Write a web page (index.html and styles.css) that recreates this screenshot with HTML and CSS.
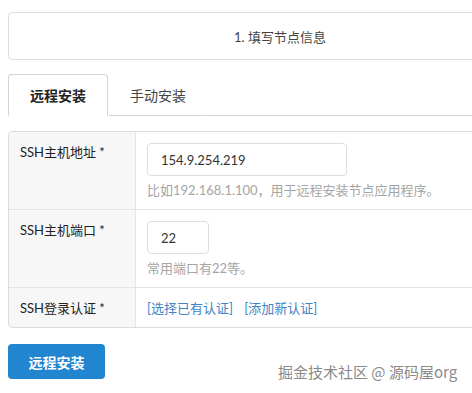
FILE: index.html
```html
<!DOCTYPE html>
<html lang="zh-CN">
    <head>
        <meta charset="UTF-8">
        <meta name="viewport" content="width=device-width, initial-scale=1.0">
        <title>安装节点</title>
        <link rel="stylesheet" href="styles.css">
    </head>
    <body>
        <div class="page">
            <div class="steps">
                <div class="step">1. 填写节点信息</div>
            </div>
            <div class="tabs">
                <a class="tab active">远程安装</a>
                <a class="tab">手动安装</a>
                <div class="tab-fill"></div>
            </div>
            <table class="form-table">
                <tr>
                    <td class="label">SSH主机地址 *</td>
                    <td>
                        <input class="input wide" type="text" value="154.9.254.219">
                        <p class="comment">比如192.168.1.100，用于远程安装节点应用程序。</p>
                    </td>
                </tr>
                <tr>
                    <td class="label">SSH主机端口 *</td>
                    <td>
                        <input class="input narrow" type="text" value="22">
                        <p class="comment">常用端口有22等。</p>
                    </td>
                </tr>
                <tr>
                    <td class="label">SSH登录认证 *</td>
                    <td>
                        <a class="link">[选择已有认证]</a>
                        <a class="link">[添加新认证]</a>
                    </td>
                </tr>
            </table>
            <button class="btn-primary">远程安装</button>
        </div>
        <div class="watermark">掘金技术社区 @ 源码屋org</div>
    </body>
</html>
```

FILE: styles.css
```css
* {
    box-sizing: border-box;
}

html, body {
    overflow: hidden;
}

body {
    margin: 0;
    padding: 12px 8px;
    font-family: Lato, "Noto Sans CJK SC", sans-serif;
    font-size: 13px;
    color: #333333;
    background-color: white;
}

.page {
    width: 544px;
}

.steps {
    border: 1px solid #dcdcdd;
    border-radius: 4px;
    height: 48px;
    display: flex;
    align-items: center;
    justify-content: center;
}

.step {
    color: #444444;
}

.tabs {
    display: flex;
    margin-top: 14px;
    height: 42px;
}

.tab {
    display: flex;
    align-items: center;
    padding: 0 21px;
    font-size: 14px;
    color: #444444;
    border: 1px solid transparent;
    border-bottom-color: #d4d4d5;
}

.tab.active {
    font-weight: bold;
    color: #222222;
    border-color: #d4d4d5;
    border-bottom-color: transparent;
    border-radius: 4px 4px 0 0;
}

.tab-fill {
    flex: 1;
    border-bottom: 1px solid #d4d4d5;
}

.form-table {
    width: 100%;
    margin-top: 15px;
    border-collapse: separate;
    border-spacing: 0;
    border: 1px solid #dcdcdd;
    border-radius: 4px;
}

.form-table td {
    padding: 11px 11px 10px;
    vertical-align: top;
    line-height: 18px;
    border-top: 1px solid #e4e4e4;
}

.form-table tr:first-child td {
    border-top: none;
}

.form-table td.label {
    width: 127px;
    background-color: #f7f7f7;
    border-right: 1px solid #e4e4e4;
    color: #222222;
}

.form-table tr:first-child td.label {
    border-top-left-radius: 4px;
}

.form-table tr:last-child td.label {
    border-bottom-left-radius: 4px;
}

.input {
    display: block;
    height: 33px;
    padding: 0 13px;
    border: 1px solid #dedede;
    border-radius: 4px;
    font-family: Lato, "Noto Sans CJK SC", sans-serif;
    font-size: 13px;
    color: #333333;
    outline: none;
}

.wide {
    width: 200px;
}

.narrow {
    width: 62px;
}

.comment {
    margin: 5px 0 0;
    color: #a5a5a5;
}

.link {
    color: #4183c4;
    margin-right: 8px;
}

.btn-primary {
    margin-top: 16px;
    width: 97px;
    height: 35px;
    border: none;
    border-radius: 4px;
    background-color: #2185d0;
    color: white;
    font-family: Lato, "Noto Sans CJK SC", sans-serif;
    font-size: 14px;
    font-weight: bold;
}

.watermark {
    position: absolute;
    left: 278px;
    top: 361px;
    font-family: "Noto Sans CJK SC", sans-serif;
    font-size: 15px;
    color: #8a8a8a;
    text-shadow: 0 0 2px white;
}
```
